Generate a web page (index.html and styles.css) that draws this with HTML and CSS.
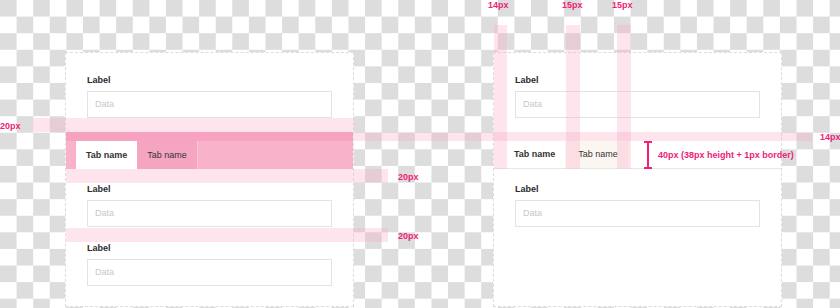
FILE: index.html
```html
<!DOCTYPE html>
<html>
<head>
  <title>Tabs spacing spec</title>
  <link rel="stylesheet" href="styles.css">
</head>
<body>
  <div class="board">
    <!-- Left: tabs between form fields -->
    <section class="card">
      <div class="field">
        <div class="label">Label</div>
        <div class="input">Data</div>
      </div>
      <div class="tabs tabs-marked">
        <span class="tab active">Tab name</span>
        <span class="tab">Tab name</span>
      </div>
      <div class="field">
        <div class="label">Label</div>
        <div class="input">Data</div>
      </div>
      <div class="field">
        <div class="label">Label</div>
        <div class="input">Data</div>
      </div>
    </section>

    <!-- Right: tab bar measurements -->
    <section class="card">
      <div class="field">
        <div class="label">Label</div>
        <div class="input">Data</div>
      </div>
      <div class="tabs tabs-plain">
        <span class="tab active">Tab name</span>
        <span class="tab">Tab name</span>
      </div>
      <div class="field">
        <div class="label">Label</div>
        <div class="input">Data</div>
      </div>
    </section>
  </div>

  <!-- spacing annotations -->
  <div class="band band-a"></div>
  <div class="band band-b"></div>
  <div class="band band-c"></div>
  <div class="band band-d"></div>
  <div class="band vband vband-a"></div>
  <div class="band vband vband-b"></div>
  <div class="band vband vband-c"></div>

  <span class="note note-a">20px</span>
  <span class="note note-b">20px</span>
  <span class="note note-c">20px</span>
  <span class="note note-d">14px</span>
  <span class="note note-e">14px</span>
  <span class="note note-f">15px</span>
  <span class="note note-g">15px</span>

  <div class="ibeam"></div>
  <span class="note note-h">40px (38px height + 1px border)</span>
</body>
</html>
```

FILE: styles.css
```css
/* Spec sheet for tab spacing */
body {
  margin: 0;
  height: 308px;
  overflow: hidden;
  position: relative;
  font-family: 'Liberation Sans', Arial, sans-serif;
  font-size: 9px;
  color: #333;
  background: repeating-conic-gradient(#fff 0 25%, #dddddd 0 50%) 0 0 / 33.2px 33.2px;
}

.board {
  display: flex;
  gap: 139px;
  padding: 52px 0 0 65px;
}

.card {
  width: 289px;
  height: 255px;
  box-sizing: border-box;
  padding: 21px 21px 0 21px;
  background-color: #fff;
  border: 1px dashed #dcdcdc;
}

.field + .field {
  margin-top: 15px;
}

.label {
  font-weight: bold;
  line-height: 12px;
  margin-bottom: 5px;
  color: #2b2b2b;
}

.input {
  height: 27px;
  box-sizing: border-box;
  padding-left: 7px;
  line-height: 25px;
  border: 1px solid #e3e3e3;
  color: #c8c8c8;
}

/* Tab bar */
.tabs {
  display: flex;
  margin: 14px -21px;
  padding-left: 10px;
}

.tab {
  display: block;
  padding: 0 10px;
  line-height: 28px;
  color: #333;
}

.tab.active {
  font-weight: bold;
  background-color: #fff;
}

.tabs-marked {
  background-color: #f8b3ca;
  border-top: 9px solid #f7a2c0;
}

.tabs-marked .tab + .tab {
  background-color: #f5a5c1;
  border-right: 1px solid #f9c4d5;
}

.tabs-plain {
  padding-top: 9px;
  border-bottom: 1px solid #e8e8e8;
}

.tabs-plain .tab {
  line-height: 27px;
}

.tabs-plain .tab + .tab {
  padding: 0 11px 0 13px;
  background-color: #fcf6f1;
}

/* Annotations */
.band {
  position: absolute;
  background-color: rgba(247, 165, 195, 0.3);
}

.band-a { left: 33px; top: 118px; width: 321px; height: 14px; }
.band-b { left: 66px; top: 169px; width: 322px; height: 14px; }
.band-c { left: 66px; top: 228px; width: 322px; height: 14px; }
.band-d { left: 354px; top: 132px; width: 458px; height: 9px; }

.vband { top: 25px; height: 144px; }
.vband-a { left: 494px; width: 13px; }
.vband-b { left: 566px; width: 14px; }
.vband-c { left: 617px; width: 14px; }

.note {
  position: absolute;
  font-weight: bold;
  font-size: 9px;
  line-height: 10px;
  color: #ee2277;
  white-space: nowrap;
}

.note-a { left: 0; top: 121px; }
.note-b { left: 398px; top: 172px; }
.note-c { left: 398px; top: 231px; }
.note-d { left: 820px; top: 132px; }
.note-e { left: 488px; top: 0; }
.note-f { left: 562px; top: 0; }
.note-g { left: 612px; top: 0; }
.note-h { left: 658px; top: 150px; }

.ibeam {
  position: absolute;
  left: 644px;
  top: 141px;
  width: 8px;
  height: 28px;
  box-sizing: border-box;
  border-top: 2px solid #ee2277;
  border-bottom: 2px solid #ee2277;
  background: linear-gradient(#ee2277, #ee2277) center / 2px 100% no-repeat;
}
```
